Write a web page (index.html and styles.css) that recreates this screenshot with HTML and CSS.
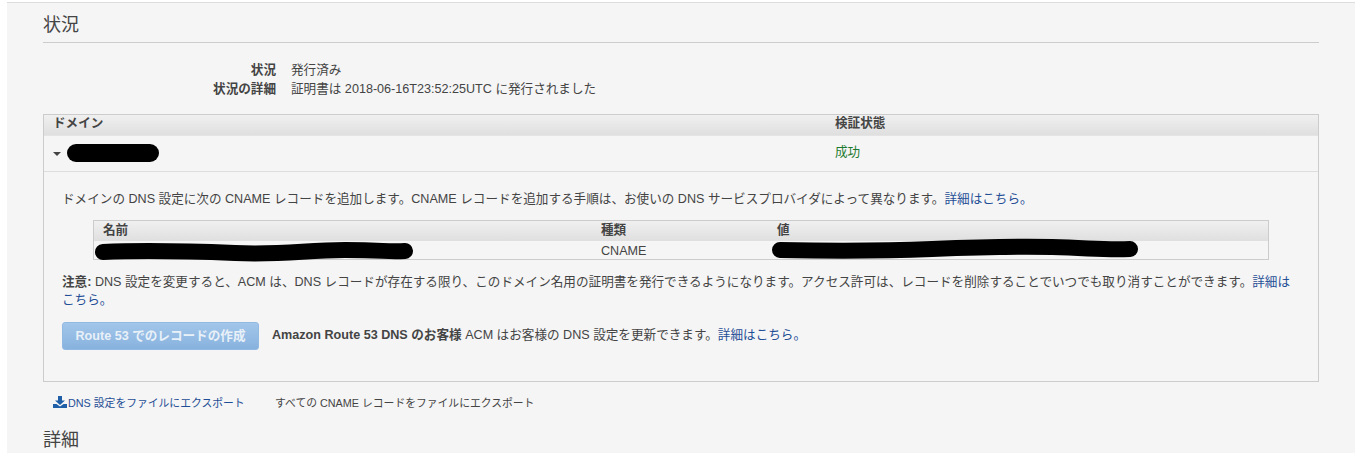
FILE: index.html
```html
<!DOCTYPE html>
<html lang="ja">
<head>
<meta charset="utf-8">
<title>状況</title>
<link rel="stylesheet" href="styles.css">
</head>
<body>
<main class="panel">
  <h2 class="heading heading-rule">状況</h2>
  <dl class="status">
    <dt>状況</dt><dd>発行済み</dd>
    <dt>状況の詳細</dt><dd>証明書は 2018-06-16T23:52:25UTC に発行されました</dd>
  </dl>
  <section class="domains">
    <div class="domains-head">
      <div>ドメイン</div>
      <div>検証状態</div>
    </div>
    <div class="domains-row">
      <div class="domain-name"><span class="caret"></span><span class="blob blob-domain"></span></div>
      <div class="success">成功</div>
    </div>
    <div class="detail">
      <p class="intro">ドメインの DNS 設定に次の CNAME レコードを追加します。CNAME レコードを追加する手順は、お使いの DNS サービスプロバイダによって異なります。<a href="#">詳細はこちら。</a></p>
      <div class="records">
        <div class="records-head">
          <div>名前</div><div>種類</div><div>値</div>
        </div>
        <div class="records-row">
          <div class="cell-name"><svg class="stroke stroke-name" viewBox="0 0 318 20" width="318" height="20" aria-hidden="true"><path d="M8 10C50 8 90 9 140 11S210 8 250 8 290 10 310 9"/></svg></div>
          <div>CNAME</div>
          <div class="cell-value"><svg class="stroke stroke-value" viewBox="0 0 366 21" width="366" height="21" aria-hidden="true"><path d="M8 12C60 13 110 13 160 11S240 8 280 9 330 12 358 11"/></svg></div>
        </div>
      </div>
      <p class="note"><strong>注意:</strong> DNS 設定を変更すると、ACM は、DNS レコードが存在する限り、このドメイン名用の証明書を発行できるようになります。アクセス許可は、レコードを削除することでいつでも取り消すことができます。<a href="#">詳細はこちら。</a></p>
      <div class="route">
        <button class="btn" type="button">Route 53 でのレコードの作成</button>
        <p class="route-text"><strong>Amazon Route 53 DNS のお客様</strong> ACM はお客様の DNS 設定を更新できます。<a href="#">詳細はこちら。</a></p>
      </div>
    </div>
  </section>
  <div class="exports">
    <a href="#" class="export-link"><svg class="dl" viewBox="0 0 14 12" width="14" height="12" aria-hidden="true"><path d="M5 0h4v4.500h3L7 9 2 4.500h3z"/><path d="M0 8h3.500L7 10.500 10.500 8H14v4H0z"/></svg>DNS 設定をファイルにエクスポート</a>
    <span class="export-all">すべての CNAME レコードをファイルにエクスポート</span>
  </div>
  <h2 class="heading">詳細</h2>
</main>
</body>
</html>
```
FILE: styles.css
```css
* { box-sizing: border-box; }
html, body { margin: 0; padding: 0; background: #fff; }
body {
  height: 453px;
  overflow: hidden;
  font-family: "Liberation Sans", "Noto Sans CJK JP", sans-serif;
  font-size: 12.6px;
  color: #444;
}
a { color: #1f4e96; text-decoration: none; }
p { margin: 0; }
.panel {
  margin: 2px 14px 0 7px;
  height: 451px;
  padding: 0 36px;
  background: #f5f5f5;
  border-top: 1px solid #ddd;
  overflow: hidden;
}
.heading {
  margin: 0;
  font-size: 18px;
  font-weight: 400;
  line-height: 26px;
  color: #444;
}
.heading-rule {
  height: 40px;
  padding-top: 9px;
  border-bottom: 1px solid #ccc;
}
.status {
  display: grid;
  grid-template-columns: 233px 1fr;
  column-gap: 15px;
  margin: 18px 0 0;
  line-height: 19px;
}
.status dt { font-weight: 700; text-align: right; }
.status dd { margin: 0; }
.domains {
  margin-top: 15px;
  height: 268px;
  border: 1px solid #ccc;
}
.domains-head, .domains-row { display: grid; grid-template-columns: 782px 1fr; }
.domains-head {
  height: 21px;
  line-height: 17px;
  padding-left: 9px;
  font-weight: 700;
  background: linear-gradient(#f0f0f0, #dfdfdf);
  border-bottom: 1px solid #e4e4e4;
}
.domains-row {
  height: 36px;
  padding-left: 9px;
  align-items: center;
  border-bottom: 1px solid #ddd;
}
.domain-name { display: flex; align-items: center; gap: 6px; margin-top: -2px; }
.caret {
  width: 0;
  height: 0;
  border-left: 4px solid transparent;
  border-right: 4px solid transparent;
  border-top: 4px solid #444;
  margin-top: 2px;
}
.blob { display: block; background: #000; border-radius: 10px; }
.blob-domain { width: 92px; height: 18px; }
.success { color: #1d7a30; margin-top: -7px; }
.detail { padding: 19px 18px 0; }
.intro { line-height: 17px; }
.records {
  margin: 12px 31px 0;
  border: 1px solid #ccc;
  height: 40px;
  width: 1176px;
}
.records-head, .records-row {
  display: grid;
  grid-template-columns: 498px 176px 1fr;
  padding-left: 9px;
}
.records-head {
  height: 20px;
  line-height: 18px;
  font-weight: 700;
  background: linear-gradient(#f0f0f0, #dfdfdf);
}
.records-row { height: 18px; line-height: 20px; align-items: center; }
.stroke { display: block; fill: none; stroke: #000; stroke-width: 16; stroke-linecap: round; stroke-linejoin: round; }
.stroke-name { margin: 0 0 0 -8px; }
.stroke-value { margin: -4px 0 0 -5px; }
.cell-value, .cell-name { height: 18px; }
.note { margin-top: 13px; line-height: 18px; }
.note strong { font-weight: 700; }
.route { display: flex; align-items: center; gap: 13px; margin-top: 13px; }
.route-text { padding-bottom: 5px; }
.btn {
  flex: none;
  width: 197px;
  height: 28px;
  padding: 0 0 4px;
  border: 1px solid #92b9e2;
  border-radius: 3px;
  background: linear-gradient(#a3c6ea, #87b2de);
  color: #e8f0f8;
  font: 700 12.6px "Liberation Sans", "Noto Sans CJK JP", sans-serif;
}
.exports {
  display: flex;
  align-items: center;
  margin: 12px 0 0 10px;
  height: 16px;
  font-size: 10.8px;
}
.export-link { display: flex; align-items: center; gap: 1px; width: 222px; }
.dl { fill: #1f5fa8; flex: none; }
.export-all { color: #444; }
.exports + .heading { margin-top: 17px; }
```
